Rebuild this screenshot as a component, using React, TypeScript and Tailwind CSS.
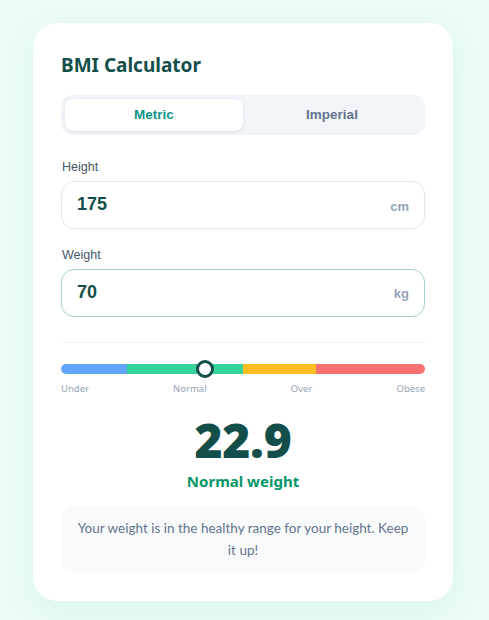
import React, { useState } from 'react';

const sans = "font-['Noto_Sans',sans-serif]";
const lato = "font-['Lato',sans-serif]";
const arial = "font-['Liberation_Sans',Arial,sans-serif]";

const segments = [
  { name: 'under', w: 'w-[18.1%]', color: 'bg-[#60a5fa]' },
  { name: 'normal', w: 'w-[31.9%]', color: 'bg-[#34d399]' },
  { name: 'over', w: 'w-[20%]', color: 'bg-[#fbbf24]' },
  { name: 'obese', w: 'w-[30%]', color: 'bg-[#f87171]' },
];

const Field = ({ label, value, unit, focused }: { label: string; value: string; unit: string; focused?: boolean }) => (
  <div className="flex flex-col">
    <label className={`${arial} text-[12.5px] font-medium text-[#475569] mb-[4px] ml-px`}>{label}</label>
    <div
      className={`flex items-center h-[48px] rounded-[13px] border bg-white px-[15px] ${
        focused ? 'border-[#a5d2d4]' : 'border-[#e2e8f0]'
      }`}
    >
      <input
        value={value}
        readOnly
        className={`${arial} flex-1 min-w-0 bg-transparent outline-none text-[18px] font-bold text-[#134e4a]`}
      />
      <span className={`${arial} text-[13px] font-bold text-[#94a3b8] mt-[3px]`}>{unit}</span>
    </div>
  </div>
);

export default function App() {
  const [unit, setUnit] = useState<'metric' | 'imperial'>('metric');

  return (
    <div className="min-h-screen bg-[#ecfbf6] pl-[33px] pt-[23px]">
      <div className="w-[420px] h-[578px] bg-white rounded-[24px] shadow-[0_10px_30px_rgba(20,184,166,0.08)] px-[28px] pt-[28px]">
        <h1 className={`${sans} text-[19px] font-bold text-[#134e4a] leading-none mt-[5px]`}>BMI Calculator</h1>

        {/* unit toggle */}
        <div className="mt-[20px] flex h-[40px] rounded-[12px] bg-[#f1f5f9] p-[4px]">
          {(['metric', 'imperial'] as const).map((u) => (
            <button
              key={u}
              onClick={() => setUnit(u)}
              className={`${arial} flex-1 rounded-[8px] text-[13.5px] font-bold ${
                unit === u ? 'bg-white text-[#0d9488] shadow-[0_1px_3px_rgba(0,0,0,0.1)]' : 'text-[#64748b]'
              }`}
            >
              {u === 'metric' ? 'Metric' : 'Imperial'}
            </button>
          ))}
        </div>

        <div className="mt-[23px] flex flex-col gap-[17px]">
          <Field label="Height" value="175" unit="cm" />
          <Field label="Weight" value="70" unit="kg" focused />
        </div>

        <div className="mt-[25px] h-px bg-[#f1f5f9]" />

        {/* scale */}
        <div className="mt-[21px] relative">
          <div className="flex h-[10px] rounded-full overflow-hidden">
            {segments.map((s) => (
              <div key={s.name} className={`${s.w} ${s.color}`} />
            ))}
          </div>
          <div className="absolute top-[-4px] left-[39.6%] -translate-x-1/2 w-[18px] h-[18px] rounded-full bg-white border-[3px] border-[#134e4a]" />
        </div>
        <div className={`${sans} mt-[8px] flex justify-between text-[9.5px] text-[#94a3b8]`}>
          <span>Under</span>
          <span>Normal</span>
          <span>Over</span>
          <span>Obese</span>
        </div>

        {/* result */}
        <div className="mt-[20px] flex flex-col items-center">
          <div className={`${sans} text-[48px] font-black leading-none text-[#134e4a] tracking-[-0.3px]`}>22.9</div>
          <div className={`${sans} mt-[10px] text-[15px] font-bold text-[#059669] leading-none`}>Normal weight</div>
        </div>

        <div className={`${lato} mt-[17px] h-[66px] rounded-[13px] bg-[#f8fafc] px-[16px] flex items-center justify-center text-center text-[13.5px] leading-[22px] text-[#64748b]`}>
          Your weight is in the healthy range for your height. Keep it up!
        </div>
      </div>
    </div>
  );
}
